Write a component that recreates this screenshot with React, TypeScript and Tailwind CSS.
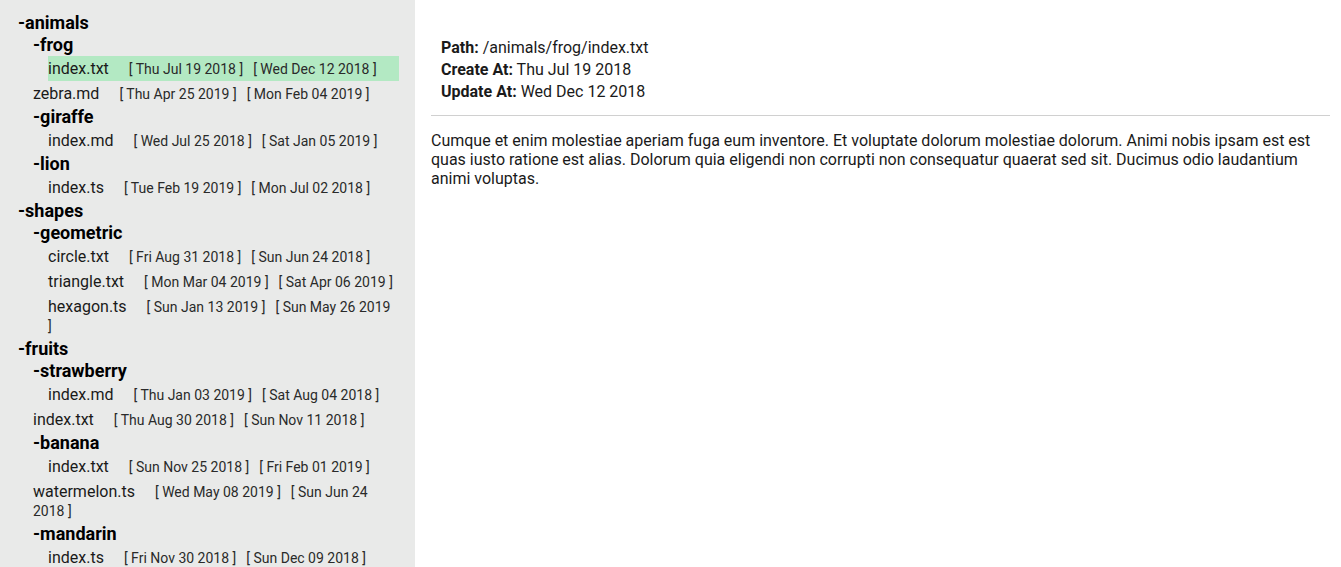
type Node = {
  name: string;
  created?: string;
  updated?: string;
  children?: Node[];
};

const tree: Node[] = [
  {
    name: "animals",
    children: [
      {
        name: "frog",
        children: [{ name: "index.txt", created: "Thu Jul 19 2018", updated: "Wed Dec 12 2018" }],
      },
      { name: "zebra.md", created: "Thu Apr 25 2019", updated: "Mon Feb 04 2019" },
      {
        name: "giraffe",
        children: [{ name: "index.md", created: "Wed Jul 25 2018", updated: "Sat Jan 05 2019" }],
      },
      {
        name: "lion",
        children: [{ name: "index.ts", created: "Tue Feb 19 2019", updated: "Mon Jul 02 2018" }],
      },
    ],
  },
  {
    name: "shapes",
    children: [
      {
        name: "geometric",
        children: [
          { name: "circle.txt", created: "Fri Aug 31 2018", updated: "Sun Jun 24 2018" },
          { name: "triangle.txt", created: "Mon Mar 04 2019", updated: "Sat Apr 06 2019" },
          { name: "hexagon.ts", created: "Sun Jan 13 2019", updated: "Sun May 26 2019" },
        ],
      },
    ],
  },
  {
    name: "fruits",
    children: [
      {
        name: "strawberry",
        children: [{ name: "index.md", created: "Thu Jan 03 2019", updated: "Sat Aug 04 2018" }],
      },
      { name: "index.txt", created: "Thu Aug 30 2018", updated: "Sun Nov 11 2018" },
      {
        name: "banana",
        children: [{ name: "index.txt", created: "Sun Nov 25 2018", updated: "Fri Feb 01 2019" }],
      },
      { name: "watermelon.ts", created: "Wed May 08 2019", updated: "Sun Jun 24 2018" },
      {
        name: "mandarin",
        children: [{ name: "index.ts", created: "Fri Nov 30 2018", updated: "Sun Dec 09 2018" }],
      },
    ],
  },
];

const selectedPath = "/animals/frog/index.txt";

function TreeNode({ node, path }: { node: Node; path: string }) {
  const fullPath = `${path}/${node.name}`;

  if (node.children) {
    return (
      <div>
        <div className="text-[18px] font-bold leading-[22px] text-black">-{node.name}</div>
        <div className="ml-[15px]">
          {node.children.map((child) => (
            <TreeNode key={child.name} node={child} path={fullPath} />
          ))}
        </div>
      </div>
    );
  }

  const selected = fullPath === selectedPath;
  return (
    <div
      className={`py-[3px] pr-[5px] text-[16px] leading-[19px] text-[#1a1a1a] ${selected ? "bg-[#b3e9c3]" : ""}`}
    >
      <span>{node.name}</span>
      <span className="ml-5 text-[14px] leading-[14px] text-[#2a2a2a]">[ {node.created} ]</span>
      <span className="ml-[10px] text-[14px] leading-[14px] text-[#2a2a2a]">[ {node.updated} ]</span>
    </div>
  );
}

export default function App() {
  return (
    <div className="flex h-[567px] overflow-hidden bg-white font-['Roboto',sans-serif]">
      {/* Sidebar tree */}
      <aside className="w-[415px] shrink-0 overflow-hidden bg-[#e9eae9] pl-[18px] pr-4 pt-[12px]">
        {tree.map((node) => (
          <TreeNode key={node.name} node={node} path="" />
        ))}
      </aside>

      {/* File detail */}
      <main className="flex-1 pl-4 pr-[11px] pt-[37px] text-[#1a1a1a]">
        <div className="pl-[10px] text-[16px] leading-[22px]">
          <div>
            <span className="font-bold">Path:</span> {selectedPath}
          </div>
          <div>
            <span className="font-bold">Create At:</span> Thu Jul 19 2018
          </div>
          <div>
            <span className="font-bold">Update At:</span> Wed Dec 12 2018
          </div>
        </div>
        <hr className="mt-3 border-t border-[#d0d0d0]" />
        <p className="mt-[15px] text-[16px] leading-[19px]">
          Cumque et enim molestiae aperiam fuga eum inventore. Et voluptate dolorum molestiae dolorum. Animi nobis
          ipsam est est quas iusto ratione est alias. Dolorum quia eligendi non corrupti non consequatur quaerat sed
          sit. Ducimus odio laudantium animi voluptas.
        </p>
      </main>
    </div>
  );
}
